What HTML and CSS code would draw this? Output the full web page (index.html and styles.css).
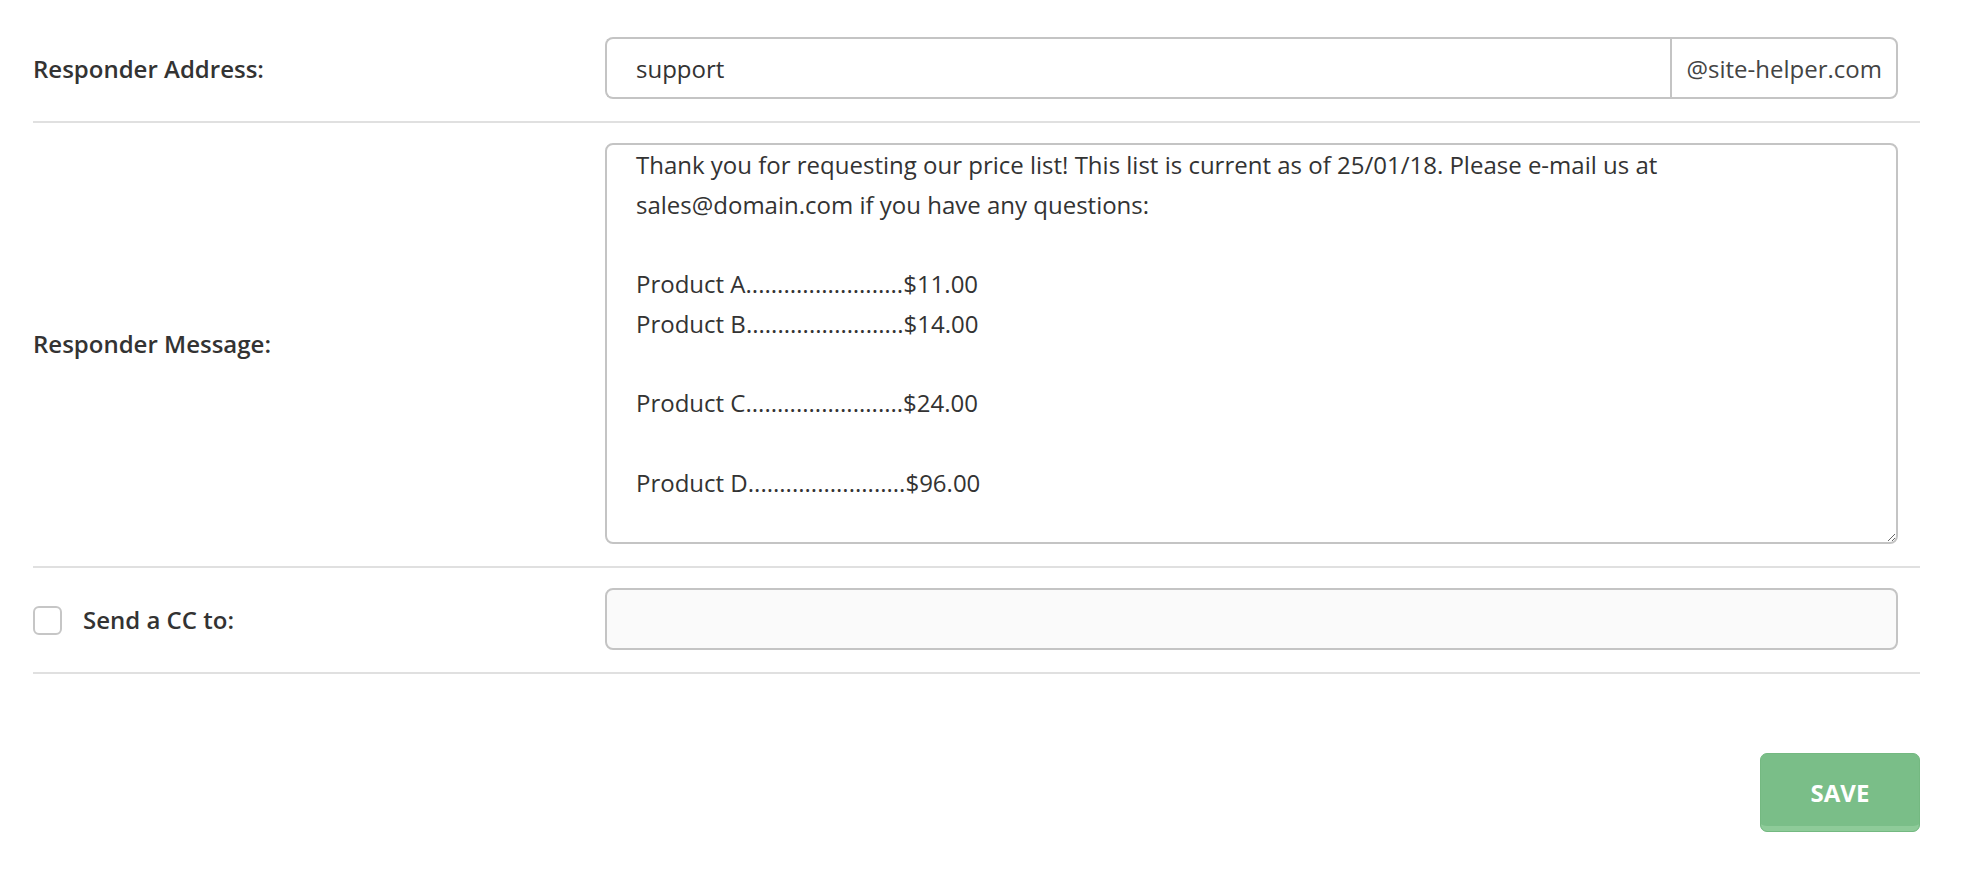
FILE: index.html
```html
<!DOCTYPE html>
<html lang="en">
<head>
    <meta charset="UTF-8">
    <meta name="viewport" content="width=device-width, initial-scale=1.0">
    <title>Autoresponder</title>

    <link rel="stylesheet" href="styles.css">
</head>
<body>

    <form class="responder">

        <div class="row">
            <label class="label" for="address">Responder Address:</label>
            <div class="field input_group">
                <input type="text" id="address" value="support">
                <span class="addon">@site-helper.com</span>
            </div>
        </div>

        <div class="row">
            <label class="label" for="message">Responder Message:</label>
            <div class="field">
                <textarea id="message">Thank you for requesting our price list! This list is current as of 25/01/18. Please e-mail us at
sales@domain.com if you have any questions:

Product A.........................$11.00
Product B.........................$14.00

Product C.........................$24.00

Product D.........................$96.00</textarea>
            </div>
        </div>

        <div class="row">
            <div class="label check">
                <span class="box"></span>
                <label for="cc">Send a CC to:</label>
            </div>
            <div class="field">
                <input type="text" id="cc" class="muted">
            </div>
        </div>

        <div class="actions">
            <button type="button" id="save">Save</button>
        </div>

    </form>

</body>
</html>
```

FILE: styles.css
```css
body {
    margin: 0;
    padding: 0;
    font-family: "Open Sans", "Liberation Sans", sans-serif;
    color: #333;
    background: #fff;
}

.responder {
    width: 1887px;
    padding: 17px 0 0 33px;
}

.row {
    display: grid;
    grid-template-columns: 572px 1293px;
    align-items: center;
    padding: 20px 0 22px;
    border-bottom: 2px solid #e0e0e0;
}

.label {
    font-size: 24px;
    font-weight: 600;
    color: #333;
}

.check {
    display: flex;
    align-items: center;
    gap: 21px;
}

.box {
    width: 25px;
    height: 25px;
    margin-top: 2px;
    border: 2px solid #c6c6c6;
    border-radius: 6px;
}

.field input,
.field textarea {
    box-sizing: border-box;
    width: 100%;
    font-family: "Open Sans", "Liberation Sans", sans-serif;
    font-size: 24px;
    color: #333;
    border: 2px solid #c4c4c4;
    border-radius: 8px;
    outline: none;
    margin: 0;
}

.field input {
    height: 62px;
    padding: 0 29px;
}

.input_group {
    display: flex;
}

.input_group input {
    flex: 1;
    border-radius: 8px 0 0 8px;
    border-right: none;
}

.addon {
    display: flex;
    align-items: center;
    height: 62px;
    box-sizing: border-box;
    padding: 0 14px 0 15px;
    font-size: 24px;
    color: #444;
    border: 2px solid #c4c4c4;
    border-radius: 0 8px 8px 0;
}

.field textarea {
    display: block;
    height: 401px;
    padding: 0 29px;
    line-height: 39.7px;
    resize: vertical;
}

.field input.muted {
    background: #fafafa;
}

.actions {
    display: flex;
    justify-content: flex-end;
    padding-top: 79px;
}

#save {
    width: 160px;
    height: 79px;
    font-family: "Open Sans", "Liberation Sans", sans-serif;
    font-size: 24px;
    font-weight: 700;
    text-transform: uppercase;
    color: #fff;
    background-color: rgb(122, 190, 136);
    border: 1px solid rgb(116, 185, 129);
    border-radius: 7px;
    box-shadow: inset 0 -10px 0 -5px rgb(142, 203, 153);
    cursor: pointer;
}
```
